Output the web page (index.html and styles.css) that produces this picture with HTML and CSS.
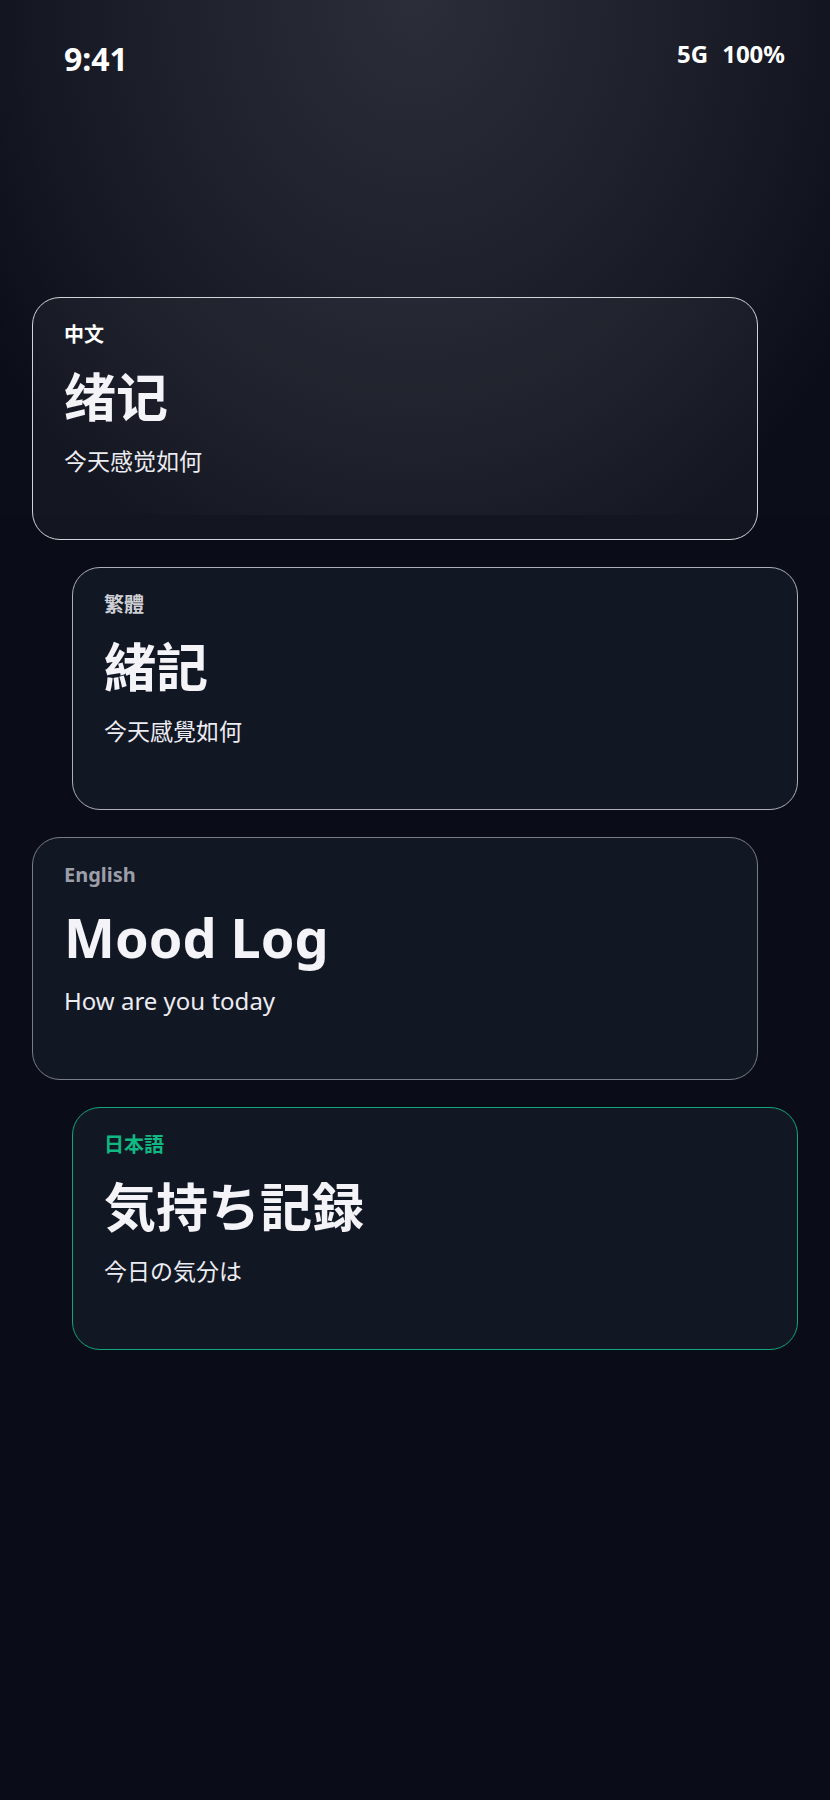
FILE: index.html
```html
<!DOCTYPE html>
<html lang="zh-CN">
<head>
<meta charset="utf-8">
<title>绪记</title>
<link rel="stylesheet" href="styles.css">
</head>
<body>
<div class="screen">
  <header class="status">
    <span class="time">9:41</span>
    <span class="indicators"><span>5G</span><span>100%</span></span>
  </header>
  <main class="cards">
    <section class="card card-sc" lang="zh-CN">
      <div class="label">中文</div>
      <h1 class="title">绪记</h1>
      <p class="sub">今天感觉如何</p>
    </section>
    <section class="card card-tc shift" lang="zh-TW">
      <div class="label">繁體</div>
      <h1 class="title">緒記</h1>
      <p class="sub">今天感覺如何</p>
    </section>
    <section class="card card-en" lang="en">
      <div class="label">English</div>
      <h1 class="title">Mood Log</h1>
      <p class="sub">How are you today</p>
    </section>
    <section class="card card-jp shift" lang="ja">
      <div class="label">日本語</div>
      <h1 class="title">気持ち記録</h1>
      <p class="sub">今日の気分は</p>
    </section>
  </main>
</div>
</body>
</html>
```
FILE: styles.css
```css
html, body {
  margin: 0;
  padding: 0;
}
body {
  min-height: 1800px;
  background:
    radial-gradient(ellipse 62% 120% at 50% 0%, #2b2e38 0%, #1f222c 45%, #151823 75%, #0b0e19 100%) no-repeat 0 0 / 100% 515px,
    #0a0d17;
  color: #f4f4f8;
  font-family: "Noto Sans", "Noto Sans CJK SC", sans-serif;
}
.status {
  display: flex;
  justify-content: space-between;
  align-items: flex-start;
  padding: 37px 45px 0 64px;
  height: 44px;
  color: #ffffff;
  font-weight: 700;
}
.time {
  font-size: 32px;
  line-height: 44px;
}
.indicators {
  display: flex;
  gap: 14px;
  font-size: 24px;
  line-height: 33px;
}
.cards {
  display: flex;
  flex-direction: column;
  gap: 27px;
  padding: 216px 32px 0;
}
.card {
  box-sizing: border-box;
  width: calc(100% - 40px);
  height: 243px;
  padding: 25px 31px 0;
  border: 1px solid rgba(255, 255, 255, 0.55);
  border-radius: 28px;
  background: rgba(40, 50, 72, 0.28);
}
.shift {
  margin-left: 40px;
}
.label {
  font-size: 20px;
  line-height: 24px;
  font-weight: 700;
}
.title {
  margin: 19px 0 0;
  font-size: 52px;
  line-height: 62px;
  font-weight: 700;
  color: #f4f4f8;
}
.sub {
  margin: 18px 0 0;
  font-size: 23px;
  line-height: 30px;
  color: #ececf2;
}
.card-sc {
  border-color: #d2d3d8;
  background: rgba(255, 255, 255, 0.04);
}
.card-sc .label { color: #ffffff; }
.card-tc {
  border-color: #aeb0b7;
  font-family: "Noto Sans", "Noto Sans CJK TC", sans-serif;
}
.card-tc .label { color: #cfd0d6; font-weight: 600; }
.card-en { border-color: #7a7d87; }
.card-en .label { color: #9c9ea8; }
.card-en .title { font-size: 54px; }
.card-en .sub { font-size: 24px; }
.card-jp {
  border-color: #12a57c;
  font-family: "Noto Sans", "Noto Sans CJK JP", sans-serif;
}
.card-jp .label { color: #10b981; }
```
